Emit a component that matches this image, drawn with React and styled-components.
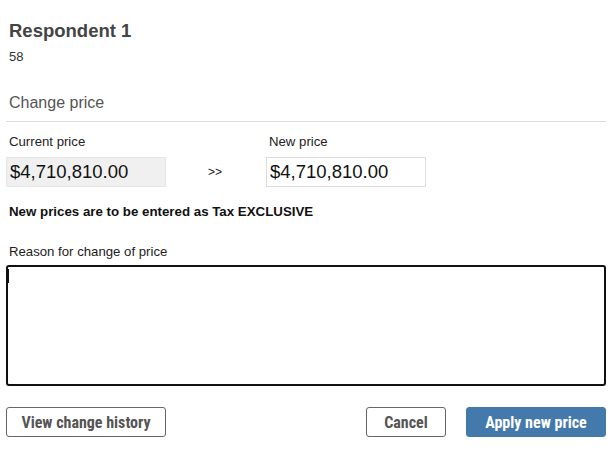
import styled, { createGlobalStyle } from 'styled-components'

const GlobalStyle = createGlobalStyle`
  body {
    margin: 0;
    background: #fff;
    font-family: 'Liberation Sans', Arial, sans-serif;
    color: #222;
  }
`

const App = () => {
  return (
    <>
      <GlobalStyle />
      <Panel>
        <Header>
          <Title>Respondent 1</Title>
          <SubId>58</SubId>
        </Header>
        <SectionTitle>Change price</SectionTitle>
        <Divider />
        <PriceGrid>
          <Label>Current price</Label>
          <span />
          <Label>New price</Label>
          <PriceBox readOnly>$4,710,810.00</PriceBox>
          <Arrow>&gt;&gt;</Arrow>
          <PriceBox>$4,710,810.00</PriceBox>
        </PriceGrid>
        <Note>New prices are to be entered as Tax EXCLUSIVE</Note>
        <Label>Reason for change of price</Label>
        <ReasonWrap>
          <Reason />
          <Caret />
        </ReasonWrap>
        <Actions>
          <Button width='160px'>View change history</Button>
          <Spacer />
          <Button width='80px'>Cancel</Button>
          <Button width='140px' type='primary'>Apply new price</Button>
        </Actions>
      </Panel>
    </>
  )
}

const Panel = styled.div`
  width: 600px;
  padding: 0 7px 0 6px;
  display: flex;
  flex-direction: column;
`

const Header = styled.div`
  padding: 20px 3px 0;
`

const Title = styled.div`
  font-size: 18.5px;
  font-weight: 700;
  color: #444;
  line-height: 21px;
`

const SubId = styled.div`
  margin-top: 9px;
  font-size: 13px;
  color: #333;
  line-height: 14px;
`

const SectionTitle = styled.div`
  margin-top: 29px;
  padding-left: 3px;
  font-size: 16px;
  color: #555;
  line-height: 19px;
`

const Divider = styled.div`
  height: 1px;
  background: #ddd;
  margin-top: 9px;
`

const PriceGrid = styled.div`
  display: grid;
  grid-template-columns: 160px 100px 160px;
  grid-template-rows: auto 30px;
  row-gap: 8px;
  margin-top: 12px;
  align-items: center;
`

const Label = styled.div`
  padding-left: 3px;
  font-size: 13.2px;
  color: #222;
  line-height: 15px;
`

const PriceBox = styled.div`
  box-sizing: border-box;
  height: 30px;
  padding: 0 3px;
  display: flex;
  align-items: center;
  font-size: 18.5px;
  color: #111;
  background: ${(props) => (props.readOnly ? '#f0f0f0' : '#fff')};
  border: 1px solid ${(props) => (props.readOnly ? '#e6e6e6' : '#dcdcdc')};
`

const Arrow = styled.div`
  text-align: center;
  font-size: 12px;
  color: #222;
  padding: 0 2px 0 0;
`

const Note = styled.div`
  margin: 17px 0 25px;
  padding-left: 3px;
  font-size: 13.3px;
  font-weight: 700;
  color: #111;
  line-height: 15px;
`

const ReasonWrap = styled.div`
  position: relative;
  margin-top: 6px;
`

const Reason = styled.div`
  box-sizing: border-box;
  height: 121px;
  border: 2px solid #111;
  border-radius: 3px;
`

const Caret = styled.span`
  position: absolute;
  left: 2px;
  top: 4px;
  width: 1px;
  height: 14px;
  background: #111;
`

const Actions = styled.div`
  display: flex;
  gap: 20px;
  margin-top: 21px;
`

const Spacer = styled.div`
  flex: 1;
`

const Button = styled.button`
  box-sizing: border-box;
  width: ${(props) => props.width};
  height: 30px;
  padding: 0;
  text-align: center;
  white-space: nowrap;
  font-family: 'Liberation Sans Narrow', 'Roboto Condensed', Roboto, sans-serif;
  font-size: 16px;
  font-weight: 700;
  border-radius: 3px;
  cursor: pointer;
  color: ${(props) => (props.type === 'primary' ? '#fff' : '#555')};
  background: ${(props) => (props.type === 'primary' ? '#4379ab' : '#fff')};
  border: 1px solid ${(props) => (props.type === 'primary' ? '#4379ab' : '#666')};
`

export default App
